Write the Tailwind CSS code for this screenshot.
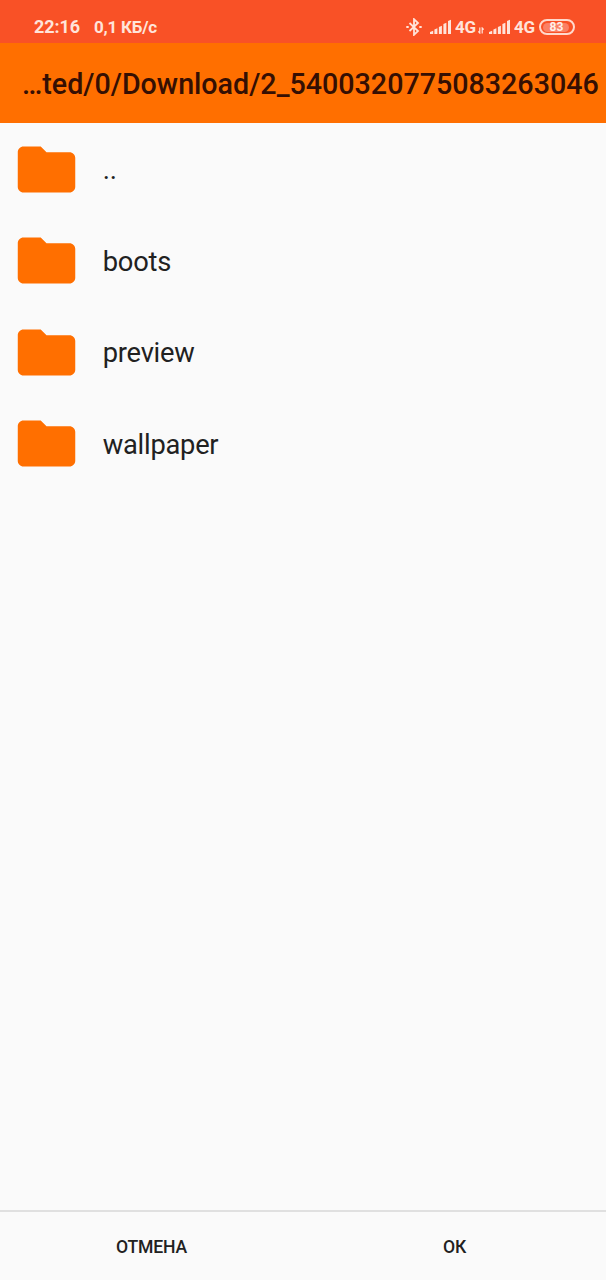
<!DOCTYPE html>
<html lang="ru">
<head>
    <meta charset="UTF-8">
    <meta name="viewport" content="width=device-width, initial-scale=1.0">
    <title>Download</title>
    <script src="https://cdn.jsdelivr.net/npm/@tailwindcss/browser@4"></script>
</head>
<body class="bg-[#fafafa] font-[Roboto,sans-serif] text-[#212121]">
    <div class="h-screen flex flex-col overflow-hidden">
        <!-- Status bar -->
        <div class="h-[43px] shrink-0 flex items-center bg-[#f95126] pt-[11px] pl-[34px] pr-[31px] text-[#ffe4da] font-bold">
            <span class="text-[18px] leading-none tracking-[-0.1px]">22:16</span>
            <span class="ml-[14px] text-[17px] leading-none tracking-[-0.2px]">0,1 КБ/с</span>
            <div class="ml-auto flex items-center">
                <svg class="w-4 h-[18px]" viewBox="0 0 16 18" fill="none" stroke="currentColor" stroke-width="1.8">
                    <path d="M3.500 5l8.500 8L8 16.800V1.200L12 5l-8.500 8"/>
                    <path d="M0.300 9h2.400M13.300 9h2.400" stroke-width="2.200"/>
                </svg>
                <svg class="ml-[8.500px] w-[22px] h-4" viewBox="0 0 22 16" fill="currentColor">
                    <path d="M0 15v-2l3.200-1.300V15zM4.400 15v-4.500l3-1.200V15zM8.900 15V8l3-1.200V15zM13.400 15V5l3-1.200V15zM18 15V2l3-1.200V15z"/>
                </svg>
                <span class="ml-[3px] w-[21px] text-[17px] leading-none tracking-[-0.3px]">4G</span>
                <svg class="ml-[2px] mt-1.5 w-[6px] h-[7px]" viewBox="0 0 6 7" fill="none" stroke="currentColor" stroke-width="1.200">
                    <path d="M1.800 0.500v5.500L0.300 4.500M4.200 6.500V1L5.700 2.500"/>
                </svg>
                <svg class="ml-[5px] w-[22px] h-4" viewBox="0 0 22 16" fill="currentColor">
                    <path d="M0 15v-2l3.200-1.300V15zM4.400 15v-4.500l3-1.200V15zM8.900 15V8l3-1.200V15zM13.400 15V5l3-1.200V15zM18 15V2l3-1.200V15z"/>
                </svg>
                <span class="ml-[3px] w-[21px] text-[17px] leading-none tracking-[-0.3px]">4G</span>
                <div class="ml-1 w-9 h-4 rounded-full border-2 border-[#ffd9cc] p-[1.500px]">
                    <div class="h-full w-[26px] rounded-full bg-[#fb8064] flex items-center justify-center pl-[2px] text-[12px] leading-none text-[#fff0ea]">83</div>
                </div>
            </div>
        </div>

        <!-- Current path -->
        <header class="h-20 shrink-0 flex items-center bg-[#ff6f00] pt-[2px] pl-[22px] whitespace-nowrap">
            <h1 class="text-[28.650px] leading-none font-medium text-[#350f03]">…ted/0/Download/2_5400320775083263046</h1>
        </header>

        <!-- Folder list -->
        <ul class="flex-1 pt-[0.500px] text-[27.300px] tracking-[-0.250px]">
            <li class="h-[91.500px] flex items-center pl-[11.500px]">
                <svg class="size-[69px] text-[#ff6f00]" viewBox="0 0 24 24" fill="currentColor"><path d="M10 4H4c-1.100 0-1.990.9-1.990 2L2 18c0 1.100.9 2 2 2h16c1.100 0 2-.9 2-2V8c0-1.100-.9-2-2-2h-8l-2-2z"/></svg>
                <span class="ml-[22.250px] pt-[3px]">..</span>
            </li>
            <li class="h-[91.500px] flex items-center pl-[11.500px]">
                <svg class="size-[69px] text-[#ff6f00]" viewBox="0 0 24 24" fill="currentColor"><path d="M10 4H4c-1.100 0-1.990.9-1.990 2L2 18c0 1.100.9 2 2 2h16c1.100 0 2-.9 2-2V8c0-1.100-.9-2-2-2h-8l-2-2z"/></svg>
                <span class="ml-[22.250px] pt-[3px]">boots</span>
            </li>
            <li class="h-[91.500px] flex items-center pl-[11.500px]">
                <svg class="size-[69px] text-[#ff6f00]" viewBox="0 0 24 24" fill="currentColor"><path d="M10 4H4c-1.100 0-1.990.9-1.990 2L2 18c0 1.100.9 2 2 2h16c1.100 0 2-.9 2-2V8c0-1.100-.9-2-2-2h-8l-2-2z"/></svg>
                <span class="ml-[22.250px] pt-[3px]">preview</span>
            </li>
            <li class="h-[91.500px] flex items-center pl-[11.500px]">
                <svg class="size-[69px] text-[#ff6f00]" viewBox="0 0 24 24" fill="currentColor"><path d="M10 4H4c-1.100 0-1.990.9-1.990 2L2 18c0 1.100.9 2 2 2h16c1.100 0 2-.9 2-2V8c0-1.100-.9-2-2-2h-8l-2-2z"/></svg>
                <span class="ml-[22.250px] pt-[3px]">wallpaper</span>
            </li>
        </ul>

        <!-- Actions -->
        <div class="h-[70px] shrink-0 grid grid-cols-2 border-t-2 border-[#e0e0e0] pt-[2px] text-[17.600px] tracking-[-0.200px] font-medium">
            <button type="button">ОТМЕНА</button>
            <button type="button">ОК</button>
        </div>
    </div>
</body>
</html>
